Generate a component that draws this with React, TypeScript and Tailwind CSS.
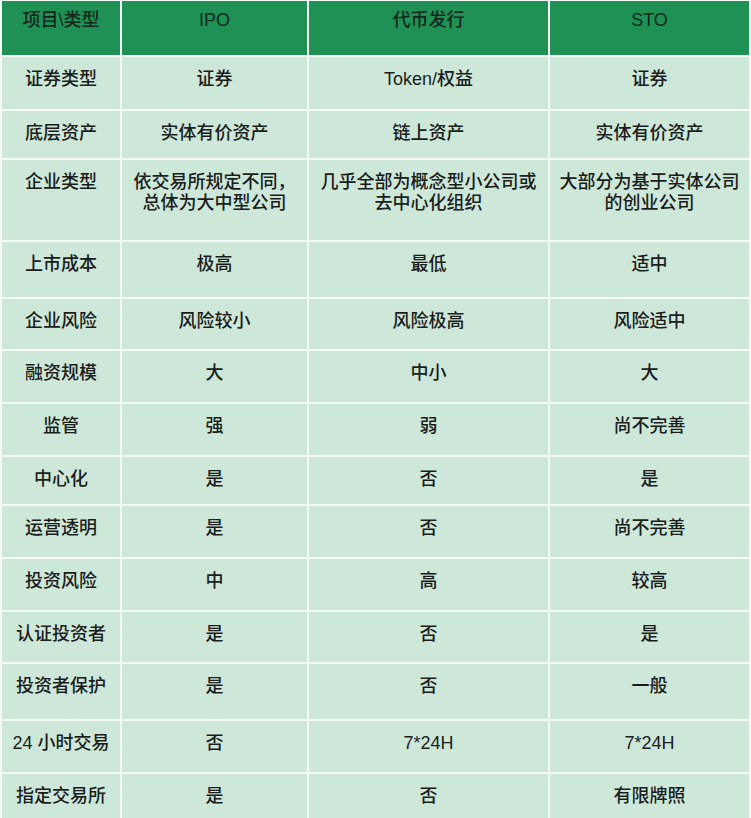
const font = { fontFamily: '"Liberation Sans", "Noto Sans CJK SC", sans-serif' }

const rows: { h: string; cells: string[][] }[] = [
  { h: "h-[52px]", cells: [["证券类型"], ["证券"], ["Token/权益"], ["证券"]] },
  { h: "h-[47px]", cells: [["底层资产"], ["实体有价资产"], ["链上资产"], ["实体有价资产"]] },
  {
    h: "h-[80px]",
    cells: [
      ["企业类型"],
      ["依交易所规定不同，", "总体为大中型公司"],
      ["几乎全部为概念型小公司或", "去中心化组织"],
      ["大部分为基于实体公司", "的创业公司"],
    ],
  },
  { h: "h-[55px]", cells: [["上市成本"], ["极高"], ["最低"], ["适中"]] },
  { h: "h-[50px]", cells: [["企业风险"], ["风险较小"], ["风险极高"], ["风险适中"]] },
  { h: "h-[51px]", cells: [["融资规模"], ["大"], ["中小"], ["大"]] },
  { h: "h-[51px]", cells: [["监管"], ["强"], ["弱"], ["尚不完善"]] },
  { h: "h-[47px]", cells: [["中心化"], ["是"], ["否"], ["是"]] },
  { h: "h-[51px]", cells: [["运营透明"], ["是"], ["否"], ["尚不完善"]] },
  { h: "h-[51px]", cells: [["投资风险"], ["中"], ["高"], ["较高"]] },
  { h: "h-[50px]", cells: [["认证投资者"], ["是"], ["否"], ["是"]] },
  { h: "h-[55px]", cells: [["投资者保护"], ["是"], ["否"], ["一般"]] },
  { h: "h-[51px]", cells: [["24 小时交易"], ["否"], ["7*24H"], ["7*24H"]] },
  { h: "h-[51px]", cells: [["指定交易所"], ["是"], ["否"], ["有限牌照"]] },
]

const headers = ["项目\\类型", "IPO", "代币发行", "STO"]

export default function App() {
  return (
    <div className="w-[751px] h-[818px] overflow-hidden bg-white" style={font}>
      <div className="bg-[#f4faf6] pt-[1px] px-[2px]">
        <div className="grid grid-cols-[118px_185px_239px_199px] gap-[2px]">
          {headers.map((h) => (
            <div
              key={h}
              className="h-[54px] bg-[#1f9155] pt-[9px] text-center text-[18px] leading-[21px] font-medium text-[#15261c]"
            >
              {h}
            </div>
          ))}
          {rows.map((row, i) =>
            row.cells.map((lines, j) => (
              <div
                key={`${i}-${j}`}
                className={`${row.h} bg-[#cde7d9] pt-[12px] text-center text-[18px] leading-[21px] font-medium text-[#1b1d1c]`}
              >
                {lines.map((l) => (
                  <div key={l}>{l}</div>
                ))}
              </div>
            ))
          )}
        </div>
      </div>
    </div>
  )
}
